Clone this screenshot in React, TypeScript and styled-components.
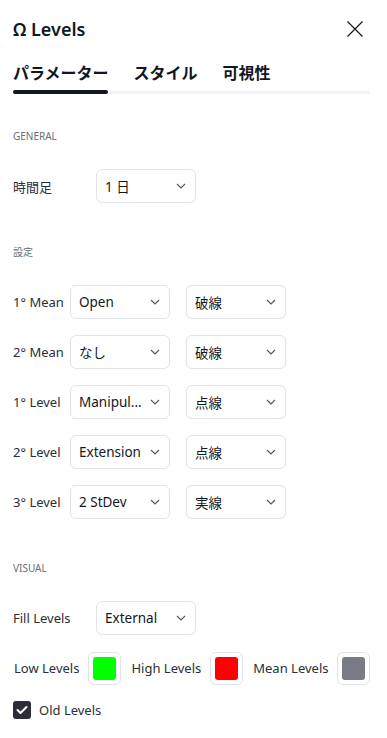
import React from "react";
import styled, { createGlobalStyle } from "styled-components";

const GlobalStyle = createGlobalStyle`
  html, body {
    margin: 0;
    padding: 0;
    background: #ffffff;
  }
  body {
    font-family: "Noto Sans", "Noto Sans CJK JP", sans-serif;
    color: #2a2e39;
  }
`;

const Panel = styled.div`
  width: 387px;
  box-sizing: border-box;
  padding: 0 17px 0 13px;
`;

const Header = styled.div`
  height: 58px;
  display: flex;
  align-items: center;
  justify-content: space-between;
`;

const Title = styled.h2`
  margin: 0;
  font-size: 18px;
  font-weight: 600;
  color: #131722;
`;

const CloseButton = styled.button`
  border: none;
  background: transparent;
  padding: 0;
  margin-right: 6px;
  width: 18px;
  height: 18px;
  display: flex;
  align-items: center;
  justify-content: center;
  color: #131722;
  cursor: pointer;
`;

const TabRow = styled.div`
  display: flex;
  gap: 25px;
  height: 30px;
  align-items: center;
`;

const Tab = styled.div<{ $active?: boolean }>`
  font-size: 16px;
  font-weight: 700;
  color: #131722;
  line-height: 30px;
`;

const TabTrack = styled.div`
  margin-top: 3px;
  height: 3px;
  background: #f0f3fa;
  border-radius: 2px;
  position: relative;
`;

const TabIndicator = styled.div<{ $width: number }>`
  position: absolute;
  left: 0;
  top: -1px;
  height: 4px;
  width: ${(p) => p.$width}px;
  background: #131722;
  border-radius: 2px;
`;

const SectionTitle = styled.div<{ $first?: boolean }>`
  margin-top: ${(p) => (p.$first ? 36 : 43)}px;
  margin-bottom: 27px;
  font-size: 10px;
  line-height: 12px;
  color: #6a6d78;
  text-transform: uppercase;
`;

const Rows = styled.div`
  display: flex;
  flex-direction: column;
  gap: 16px;
`;

const Row = styled.div`
  display: flex;
  align-items: center;
  min-height: 34px;
`;

const Label = styled.div<{ $width: number }>`
  width: ${(p) => p.$width}px;
  flex-shrink: 0;
  font-size: 13px;
  color: #2a2e39;
  white-space: nowrap;
`;

const SelectBox = styled.div<{ $gap?: number }>`
  width: 100px;
  height: 34px;
  box-sizing: border-box;
  margin-left: ${(p) => p.$gap ?? 0}px;
  border: 1px solid #e0e3eb;
  border-radius: 6px;
  display: flex;
  align-items: center;
  justify-content: space-between;
  padding: 0 9px 0 8px;
  font-size: 13.5px;
  color: #131722;
  white-space: nowrap;
`;

const Chevron = () => (
  <svg width="10" height="6" viewBox="0 0 10 6" fill="none">
    <path d="M1 1l4 4 4-4" stroke="#50535e" strokeWidth="1.1" />
  </svg>
);

const Select = ({ value, gap }: { value: string; gap?: number }) => (
  <SelectBox $gap={gap}>
    <span>{value}</span>
    <Chevron />
  </SelectBox>
);

const ColorRow = styled.div`
  display: flex;
  align-items: center;
  gap: 9px;
  height: 34px;
`;

const ColorLabel = styled.span`
  font-size: 13px;
  color: #2a2e39;
  white-space: nowrap;
  margin-left: 1px;
`;

const Swatch = styled.div<{ $color: string }>`
  width: 33px;
  height: 33px;
  box-sizing: border-box;
  border: 1px solid #e0e3eb;
  border-radius: 6px;
  padding: 4px;
  flex-shrink: 0;

  &::after {
    content: "";
    display: block;
    width: 100%;
    height: 100%;
    border-radius: 3px;
    background: ${(p) => p.$color};
  }
`;

const CheckRow = styled.label`
  margin-top: 16px;
  display: flex;
  align-items: center;
  gap: 8px;
  font-size: 13px;
  color: #2a2e39;
`;

const CheckBox = styled.span`
  width: 18px;
  height: 18px;
  border-radius: 3px;
  background: #2a2e39;
  display: flex;
  align-items: center;
  justify-content: center;
`;

const levelRows = [
  { label: "1° Mean", a: "Open", b: "破線" },
  { label: "2° Mean", a: "なし", b: "破線" },
  { label: "1° Level", a: "Manipul...", b: "点線" },
  { label: "2° Level", a: "Extension", b: "点線" },
  { label: "3° Level", a: "2 StDev", b: "実線" },
];

const colors = [
  { label: "Low Levels", color: "#00ff00" },
  { label: "High Levels", color: "#ff0000" },
  { label: "Mean Levels", color: "#787b86" },
];

export default function App() {
  return (
    <>
      <GlobalStyle />
      <Panel>
        <Header>
          <Title>Ω Levels</Title>
          <CloseButton aria-label="close">
            <svg width="18" height="18" viewBox="0 0 18 18" fill="none">
              <path d="M1.5 1.5l15 15M16.5 1.5l-15 15" stroke="#131722" strokeWidth="1.2" />
            </svg>
          </CloseButton>
        </Header>

        <TabRow>
          <Tab $active>パラメーター</Tab>
          <Tab>スタイル</Tab>
          <Tab>可視性</Tab>
        </TabRow>
        <TabTrack>
          <TabIndicator $width={95} />
        </TabTrack>

        <SectionTitle $first>General</SectionTitle>
        <Row>
          <Label $width={83}>時間足</Label>
          <Select value="1 日" />
        </Row>

        <SectionTitle>設定</SectionTitle>
        <Rows>
          {levelRows.map((r) => (
            <Row key={r.label}>
              <Label $width={57}>{r.label}</Label>
              <Select value={r.a} />
              <Select value={r.b} gap={16} />
            </Row>
          ))}
        </Rows>

        <SectionTitle>Visual</SectionTitle>
        <Rows>
          <Row>
            <Label $width={83}>Fill Levels</Label>
            <Select value="External" />
          </Row>
          <ColorRow>
            {colors.map((c) => (
              <React.Fragment key={c.label}>
                <ColorLabel>{c.label}</ColorLabel>
                <Swatch $color={c.color} />
              </React.Fragment>
            ))}
          </ColorRow>
        </Rows>

        <CheckRow>
          <CheckBox>
            <svg width="12" height="10" viewBox="0 0 12 10" fill="none">
              <path d="M1.5 5l3 3 6-6" stroke="#ffffff" strokeWidth="2" strokeLinecap="round" strokeLinejoin="round" />
            </svg>
          </CheckBox>
          Old Levels
        </CheckRow>
      </Panel>
    </>
  );
}
